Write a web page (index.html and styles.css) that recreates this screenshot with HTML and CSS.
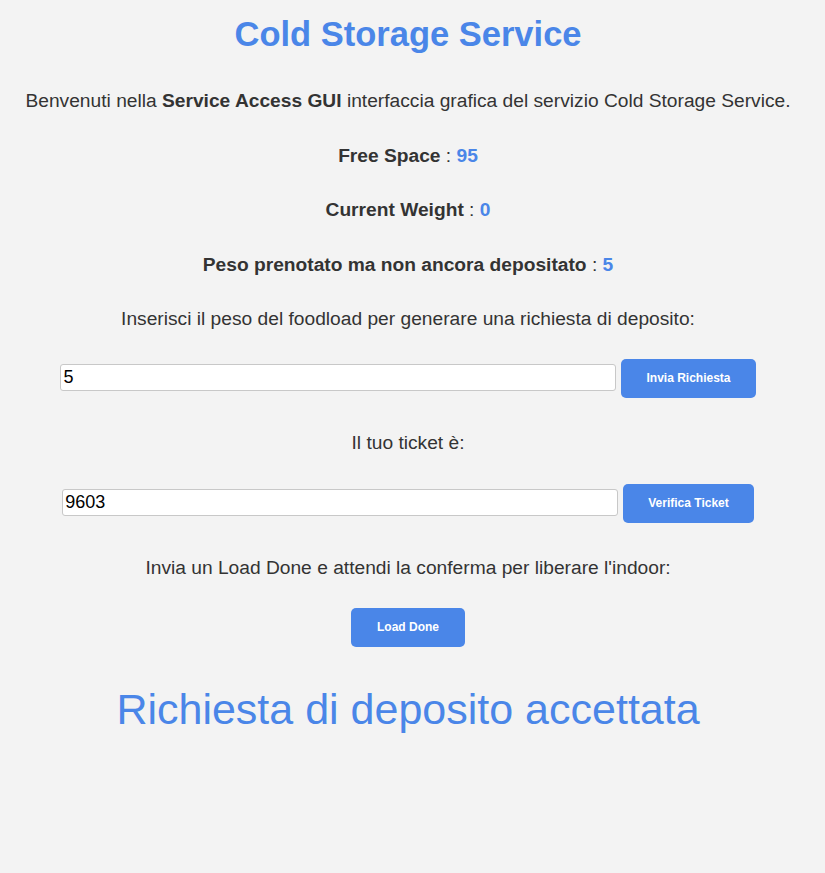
FILE: index.html
```html
<!DOCTYPE html>
<html>
<head>
<meta charset="utf-8">
<link rel="stylesheet" href="styles.css">
</head>
<body>
<main class="page">
  <h1 class="title">Cold Storage Service</h1>
  <p class="line intro">Benvenuti nella <b>Service Access GUI</b> interfaccia grafica del servizio Cold Storage Service.</p>
  <p class="line"><b>Free Space</b> : <b class="val">95</b></p>
  <p class="line"><b>Current Weight</b> : <b class="val">0</b></p>
  <p class="line"><b>Peso prenotato ma non ancora depositato</b> : <b class="val">5</b></p>
  <p class="line">Inserisci il peso del foodload per generare una richiesta di deposito:</p>
  <div class="row row-tight">
    <input class="field" type="text" value="5">
    <button class="btn">Invia Richiesta</button>
  </div>
  <p class="line after-row">Il tuo ticket è:</p>
  <div class="row">
    <input class="field" type="text" value="9603">
    <button class="btn">Verifica Ticket</button>
  </div>
  <p class="line after-row">Invia un Load Done e attendi la conferma per liberare l'indoor:</p>
  <div class="row row-tight">
    <button class="btn btn-done">Load Done</button>
  </div>
  <p class="result">Richiesta di deposito accettata</p>
</main>
</body>
</html>
```
FILE: styles.css
```css
html, body {
  margin: 0;
  padding: 0;
  background: #f3f3f3;
}
body {
  font-family: "Liberation Sans", Arial, sans-serif;
  color: #333333;
}
.page {
  width: 800px;
  margin-left: 8px;
  display: flex;
  flex-direction: column;
  align-items: center;
  text-align: center;
}
.title {
  color: #4a86e8;
  font-size: 34.5px;
  margin: 14px 0 0;
  line-height: 40px;
}
.line {
  font-size: 19.2px;
  line-height: 22px;
  margin: 32.5px 0 0;
}
.line.intro {
  margin-top: 36px;
}
.line.after-row {
  margin-top: 34.5px;
}
.val {
  color: #4a86e8;
}
.row {
  display: flex;
  align-items: center;
  justify-content: center;
  gap: 5px;
  margin-top: 29.5px;
}
.row.row-tight {
  margin-top: 28.5px;
}
.field {
  width: 556px;
  height: 27px;
  box-sizing: border-box;
  border: 1px solid #c8c8c8;
  border-radius: 3px;
  background: #fff;
  font-family: "Liberation Sans", Arial, sans-serif;
  font-size: 18px;
  color: #000;
  padding: 0 2px;
  margin: 0 0 2px;
}
.btn {
  background: #4a86e8;
  color: #fff;
  border: none;
  border-radius: 5px;
  font-family: "Liberation Sans", Arial, sans-serif;
  font-weight: bold;
  font-size: 12px;
  height: 39px;
  padding: 0 25px;
  margin: 0;
}
.btn-done {
  padding: 0 26px;
}
.result {
  color: #4a86e8;
  font-size: 43px;
  line-height: 54px;
  margin: 35px 0 0;
}
```
